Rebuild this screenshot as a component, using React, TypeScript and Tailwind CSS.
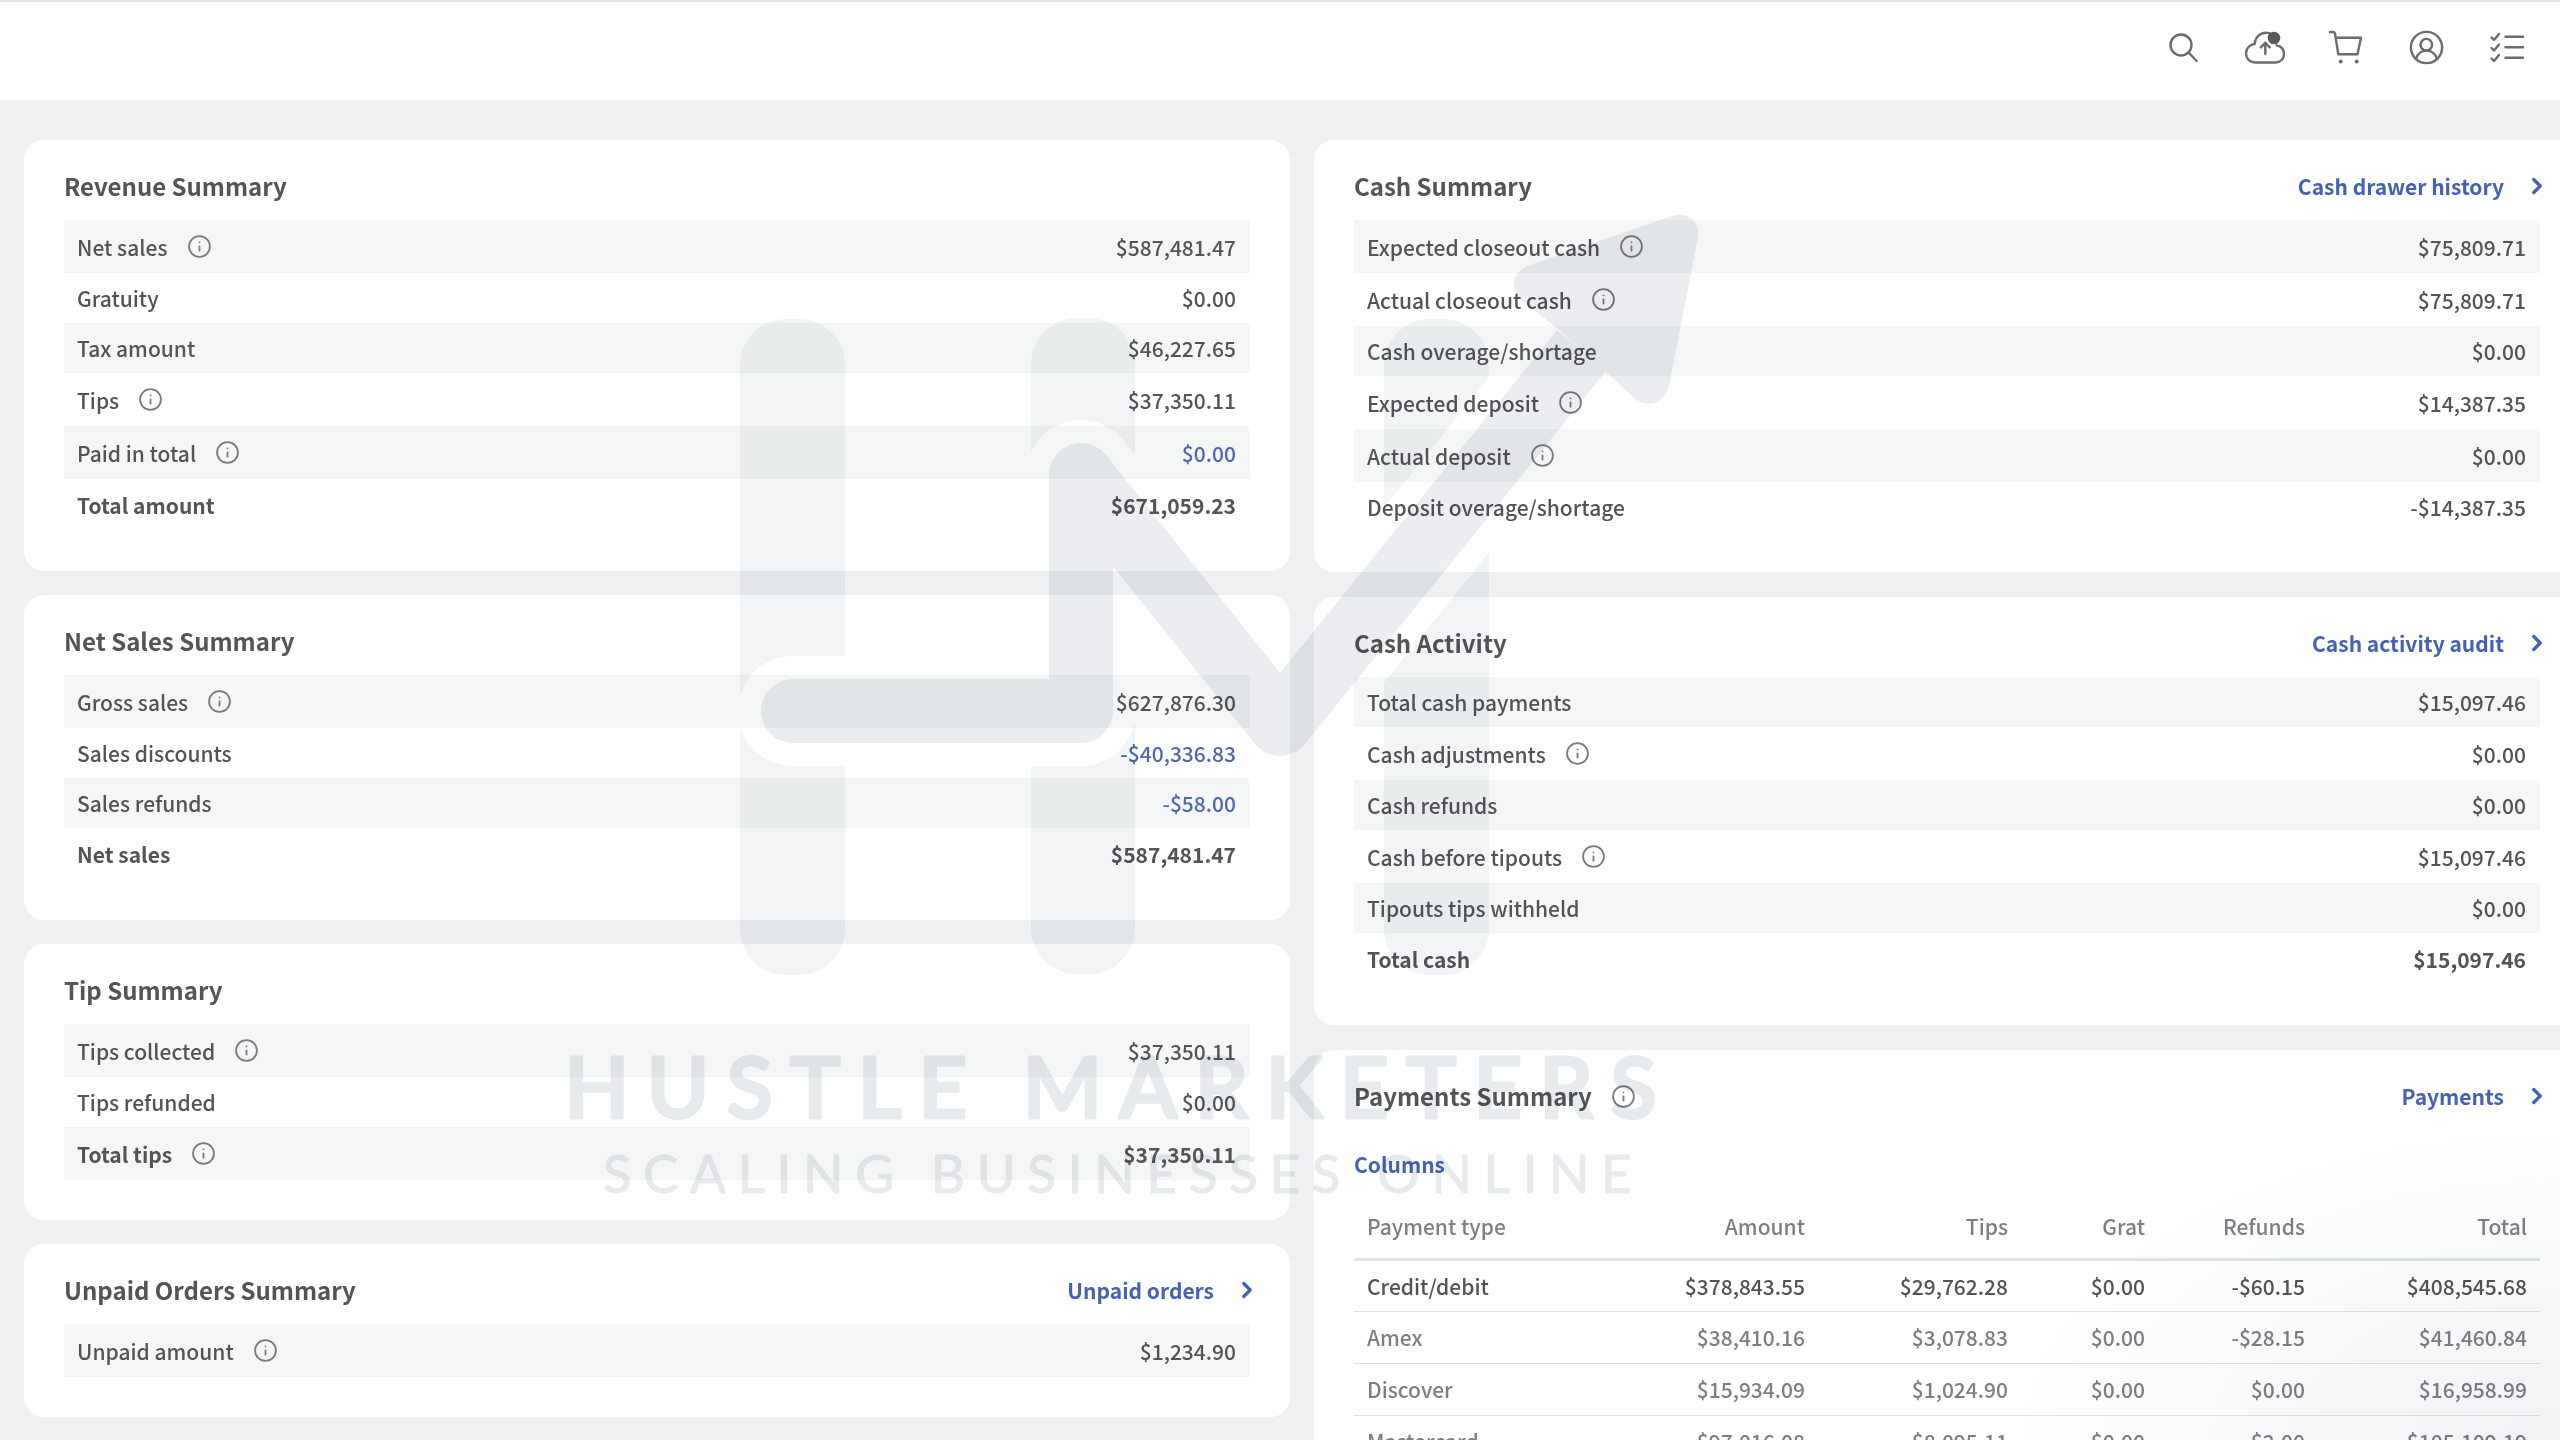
import { ReactNode } from 'react';
import { ChevronRight, Info } from 'lucide-react';

type Row = { label: string; value: string; info?: boolean; total?: boolean; link?: boolean };

const revenue: Row[] = [
  { label: 'Net sales', value: '$587,481.47', info: true },
  { label: 'Gratuity', value: '$0.00' },
  { label: 'Tax amount', value: '$46,227.65' },
  { label: 'Tips', value: '$37,350.11', info: true },
  { label: 'Paid in total', value: '$0.00', info: true, link: true },
  { label: 'Total amount', value: '$671,059.23', total: true },
];

const netSales: Row[] = [
  { label: 'Gross sales', value: '$627,876.30', info: true },
  { label: 'Sales discounts', value: '-$40,336.83', link: true },
  { label: 'Sales refunds', value: '-$58.00', link: true },
  { label: 'Net sales', value: '$587,481.47', total: true },
];

const tips: Row[] = [
  { label: 'Tips collected', value: '$37,350.11', info: true },
  { label: 'Tips refunded', value: '$0.00' },
  { label: 'Total tips', value: '$37,350.11', info: true, total: true },
];

const unpaid: Row[] = [{ label: 'Unpaid amount', value: '$1,234.90', info: true }];

const cashSummary: Row[] = [
  { label: 'Expected closeout cash', value: '$75,809.71', info: true },
  { label: 'Actual closeout cash', value: '$75,809.71', info: true },
  { label: 'Cash overage/shortage', value: '$0.00' },
  { label: 'Expected deposit', value: '$14,387.35', info: true },
  { label: 'Actual deposit', value: '$0.00', info: true },
  { label: 'Deposit overage/shortage', value: '-$14,387.35' },
];

const cashActivity: Row[] = [
  { label: 'Total cash payments', value: '$15,097.46' },
  { label: 'Cash adjustments', value: '$0.00', info: true },
  { label: 'Cash refunds', value: '$0.00' },
  { label: 'Cash before tipouts', value: '$15,097.46', info: true },
  { label: 'Tipouts tips withheld', value: '$0.00' },
  { label: 'Total cash', value: '$15,097.46', total: true },
];

const payments = [
  ['Credit/debit', '$378,843.55', '$29,762.28', '$0.00', '-$60.15', '$408,545.68'],
  ['Amex', '$38,410.16', '$3,078.83', '$0.00', '-$28.15', '$41,460.84'],
  ['Discover', '$15,934.09', '$1,024.90', '$0.00', '$0.00', '$16,958.99'],
  ['Mastercard', '$97,016.08', '$8,095.11', '$0.00', '-$2.00', '$105,109.19'],
];

function InfoButton({ label }: { label: string }) {
  return (
    <button type="button" aria-label={`About ${label}`} className="ml-[19px] text-[#7a7a83]">
      <Info size={25} strokeWidth={1.75} />
    </button>
  );
}

function Card({ title, link, info, children }: { title: string; link?: string; info?: boolean; children: ReactNode }) {
  return (
    <section className="rounded-[20px] bg-white px-10 pb-10">
      <header className="flex h-20 items-center justify-between pt-3">
        <div className="flex items-center">
          <h2 className="text-[24px] leading-8 font-bold">{title}</h2>
          {info && <InfoButton label={title} />}
        </div>
        {link && (
          <a href="#" className="-mr-2.5 flex items-center gap-5 text-[21px] leading-8 font-bold text-[#4561b4]">
            {link}
            <ChevronRight size={26} strokeWidth={3} />
          </a>
        )}
      </header>
      {children}
    </section>
  );
}

function SummaryTable({ rows }: { rows: Row[] }) {
  return (
    <table className="w-full text-[21px] leading-8">
      <tbody>
        {rows.map((row) => {
          const weight = row.total ? 'font-bold' : 'font-medium';
          return (
            <tr
              key={row.label}
              className={`odd:bg-[#f5f7f7] ${row.info ? 'h-[53px]' : row.total ? 'h-[52px]' : 'h-[50px]'}`}
            >
              <th scope="row" className={`p-0 pl-[13px] text-left ${weight}`}>
                <span className="flex items-center">
                  {row.label}
                  {row.info && <InfoButton label={row.label} />}
                </span>
              </th>
              <td className={`p-0 pr-[14px] text-right ${weight} ${row.link ? 'text-[#4f68b5]' : ''}`}>
                {row.link ? <a href="#">{row.value}</a> : row.value}
              </td>
            </tr>
          );
        })}
      </tbody>
    </table>
  );
}

function IconButton({ label, children }: { label: string; children: ReactNode }) {
  return (
    <button type="button" aria-label={label}>
      <svg
        className="size-10"
        viewBox="0 0 40 40"
        fill="none"
        stroke="currentColor"
        strokeWidth="2.4"
        strokeLinecap="round"
        strokeLinejoin="round"
      >
        {children}
      </svg>
    </button>
  );
}

function TopBar() {
  return (
    <header className="flex h-[100px] items-center justify-end gap-[41px] border-t-2 border-[#e3e7ea] bg-white pr-8 pb-1.5 text-[#6b6b72]">
      <IconButton label="Search">
        <circle cx="17" cy="17" r="10.5" />
        <path d="M24.7 24.7l8 8.3" />
      </IconButton>
      <IconButton label="Uploads">
        <path d="M27 6.4C25.3 5.3 23.2 4.8 21 4.8 14.8 4.8 10 9.6 9.7 16 4.8 16.4 1 20.4 1 25.4s4 9.1 9.3 9.1h20.2c5 0 8.5-3.8 8.5-8.5s-3-7.8-7.3-8.7" />
        <path d="M20.3 26V14.8M15.8 19.3l4.5-4.5 4.5 4.5" />
        <circle cx="29" cy="10" r="6.3" fill="#5a5a5c" stroke="none" />
      </IconButton>
      <IconButton label="Cart">
        <path d="M4 4h3.2c1 0 1.6.6 1.8 1.6l3.3 20.7h19.2L35 9.7H9.7" />
        <circle cx="14.7" cy="33.6" r="2" fill="currentColor" stroke="none" />
        <circle cx="30.7" cy="33.6" r="2" fill="currentColor" stroke="none" />
      </IconButton>
      <IconButton label="Account">
        <circle cx="19.5" cy="19.5" r="15.6" />
        <circle cx="19.3" cy="16.7" r="5.8" />
        <path d="M9 31c1.3-5 5.4-8.5 10.5-8.5S28.7 26 30 31" />
      </IconButton>
      <IconButton label="Tasks">
        <path d="M17.5 8.7H35M17.5 19.3H35M17.5 29.7H35" />
        <path d="M3.5 9.5L6 12l5-6M3.5 20L6 22.5l5-6M3.5 30.5L6 33l5-6" />
      </IconButton>
    </header>
  );
}

function Watermark() {
  return (
    <svg
      className="pointer-events-none absolute top-0 left-0 w-full mix-blend-multiply"
      viewBox="0 0 2560 1440"
      aria-hidden="true"
    >
      <defs>
        <path id="trend" d="M793 711H1081V475L1280 724L1582 350" />
        <mask id="gap" maskUnits="userSpaceOnUse" x="700" y="300" width="900" height="700">
          <rect x="700" y="300" width="900" height="700" fill="white" />
          <use href="#trend" fill="none" stroke="black" strokeWidth="110" strokeLinecap="round" strokeLinejoin="round" />
        </mask>
      </defs>
      <g fill="#f2f4f5" mask="url(#gap)">
        <rect x="740" y="319" width="105" height="656" rx="46" />
        <rect x="1031" y="318" width="104" height="656" rx="46" />
        <rect x="1384" y="319" width="105" height="656" rx="46" />
      </g>
      <use href="#trend" fill="none" stroke="#ebedf0" strokeWidth="64" strokeLinecap="butt" strokeLinejoin="round" />
      <path d="M793 679a32 32 0 0 0 0 64Z" fill="#ebedf0" />
      <path
        d="M1558 329L1521 300C1508 289 1513 271 1530 265L1672 216C1688 211 1700 221 1698 237L1669 386C1665 404 1645 409 1633 397L1606 372L1558 329Z"
        fill="#ebedf0"
      />
      <g
        fill="#e8ebee"
        stroke="#e8ebee"
        strokeLinejoin="round"
        textAnchor="middle"
        className="font-[Lato,sans-serif]"
      >
        <text x="1119" y="1118" strokeWidth="3" className="text-[85px] font-semibold tracking-[0.2em]">
          HUSTLE MARKETERS
        </text>
        <text x="1123" y="1193" strokeWidth="1" className="text-[53px] tracking-[0.22em]">
          SCALING BUSINESSES ONLINE
        </text>
      </g>
    </svg>
  );
}

export default function App() {
  return (
    <div className="relative h-screen overflow-hidden bg-[#eff1f2] font-['Noto_Sans_CJK_SC',sans-serif] text-[#545457]">
      <TopBar />
      <main className="-mr-5 grid grid-cols-2 items-start gap-6 pt-10 pl-6">
        <div className="flex flex-col gap-6">
          <Card title="Revenue Summary">
            <SummaryTable rows={revenue} />
          </Card>
          <Card title="Net Sales Summary">
            <SummaryTable rows={netSales} />
          </Card>
          <Card title="Tip Summary">
            <SummaryTable rows={tips} />
          </Card>
          <Card title="Unpaid Orders Summary" link="Unpaid orders">
            <SummaryTable rows={unpaid} />
          </Card>
        </div>
        <div className="flex flex-col gap-[25px]">
          <Card title="Cash Summary" link="Cash drawer history">
            <SummaryTable rows={cashSummary} />
          </Card>
          <Card title="Cash Activity" link="Cash activity audit">
            <SummaryTable rows={cashActivity} />
          </Card>
          <Card title="Payments Summary" link="Payments" info>
            <button type="button" className="mt-3.5 block text-[21px] leading-[40px] font-bold text-[#4561b4]">
              Columns
            </button>
            <table className="mt-[15px] w-full table-fixed text-[21px] leading-8 text-[#7e7e86]">
              <colgroup>
                <col />
                <col className="w-[213px]" />
                <col className="w-[203px]" />
                <col className="w-[137px]" />
                <col className="w-[160px]" />
                <col className="w-[222px]" />
              </colgroup>
              <thead>
                <tr className="h-[60px] border-b-3 border-[#e0e4e8]">
                  {['Payment type', 'Amount', 'Tips', 'Grat', 'Refunds', 'Total'].map((name) => (
                    <th key={name} scope="col" className="px-[13px] pt-0 pb-1 text-right font-medium first:text-left">
                      {name}
                    </th>
                  ))}
                </tr>
              </thead>
              <tbody>
                {payments.map((cells) => (
                  <tr key={cells[0]} className="h-[52px] border-b border-[#dfe3e6] font-medium first:text-[#545457]">
                    {cells.map((cell, i) => (
                      <td key={i} className="px-[13px] py-0 text-right first:text-left">
                        {cell}
                      </td>
                    ))}
                  </tr>
                ))}
              </tbody>
            </table>
          </Card>
        </div>
      </main>
      <Watermark />
      <div className="pointer-events-none absolute right-0 bottom-0 h-[320px] w-[560px] bg-[radial-gradient(ellipse_at_bottom_right,#f0f2f3,white_70%)] mix-blend-multiply" />
    </div>
  );
}
